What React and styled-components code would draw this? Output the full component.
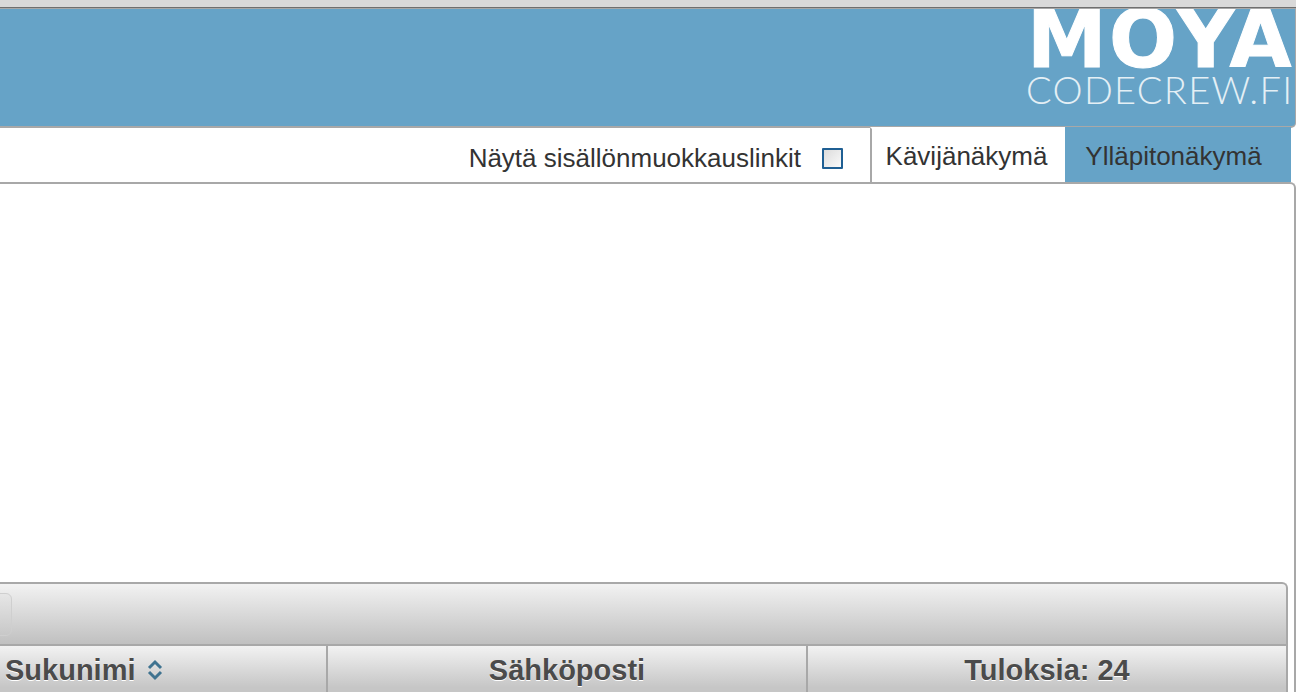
import React from "react";
import styled, { createGlobalStyle } from "styled-components";

const Global = createGlobalStyle`
  html, body { margin: 0; padding: 0; background: #fff; }
  body { font-family: "Liberation Sans", Arial, sans-serif; color: #333; overflow: hidden; }
`;
const Page = styled.div`
  width: 1296px; height: 692px; overflow: hidden; display: flex; flex-direction: column;
`;
const BrowserEdge = styled.div`
  height: 7px; flex: none; background: #d9d9d9; border-bottom: 1px solid #6f6f6f;
`;
const Header = styled.header`
  height: 117px; flex: none; background: #66a3c7; border-top: 1px solid #a8a8a8;
  border-bottom: 2px solid #a8a8a8; border-right: 1px solid #a8a8a8;
  border-bottom-right-radius: 5px; display: flex; justify-content: flex-end; overflow: hidden;
`;
const Logo = styled.div`
  width: 269px; flex: none; color: #fff; overflow: hidden; white-space: nowrap;
`;
const LogoMain = styled.div`
  font-family: "DejaVu Sans", sans-serif; font-weight: 700; font-size: 80px; line-height: 61px; height: 59px;
  letter-spacing: 2.5px; margin-left: 1px; -webkit-text-stroke: 1px #fff;
`;
const LogoSub = styled.div`
  font-family: Lato, "Open Sans", sans-serif; font-weight: 300; font-size: 38px; line-height: 36px;
  margin-top: 3px; color: #e4eff5; letter-spacing: 1.3px;
`;
const TabBar = styled.nav`
  height: 55px; flex: none; display: flex; justify-content: flex-end; align-items: stretch;
  padding-right: 5px; margin-top: -1px;
`;
const ContentToggle = styled.label`
  display: flex; align-items: center; font-size: 26px; margin-right: 27px; color: #333; padding-top: 8px;
`;
const Check = styled.span`
  width: 17px; height: 17px; margin-left: 21px; border: 2px solid #1f5f93; border-radius: 1px;
  background: linear-gradient(135deg, #dcdcdc, #fafafa); margin-top: -1px;
`;
const Tab = styled.a`
  width: ${p => p.$width}px; box-sizing: border-box; display: flex; align-items: center; justify-content: center;
  font-size: 26px;
  padding: ${p => p.$active ? "3px 9px 0 0" : "2px 4px 0 0"};
  background: ${p => p.$active ? "#66a3c7" : "#fff"};
  color: #333;
  border-left: ${p => p.$active ? "none" : "2px solid #a8a8a8"};
  border-top: ${p => p.$active ? "none" : "2px solid #fff"};
`;
const Panel = styled.main`
  flex: 1; min-height: 0; border-top: 2px solid #a8a8a8; border-right: 2px solid #a8a8a8;
  border-top-right-radius: 6px; padding-right: 6px; display: flex; flex-direction: column;
`;
const Blank = styled.div`
  height: 398px; flex: none;
`;
const Toolbar = styled.div`
  height: 60px; flex: none; display: flex; align-items: center;
  border-top: 2px solid #a8a8a8; border-right: 2px solid #a8a8a8; border-top-right-radius: 6px;
  background: linear-gradient(#f2f2f2, #c0c0c0);
`;
const ToolButton = styled.button`
  width: 40px; height: 43px; margin-left: -28px; border: 1px solid #cfcfcf; border-radius: 6px;
  background: linear-gradient(#e6e6e6, #c8c8c8); padding: 0;
`;
const TableHead = styled.div`
  flex: 1; display: grid; grid-template-columns: 326px 480px 480px; border-top: 2px solid #a8a8a8;
  border-right: 2px solid #a8a8a8; background: linear-gradient(#f2f2f2, #c6c6c6 90%);
`;
const HeadCell = styled.div`
  display: flex; align-items: flex-start; justify-content: ${p => p.$left ? "flex-start" : "center"};
  padding: ${p => p.$left ? "8px 0 0 5px" : "8px 0 0"}; font-size: 29px; font-weight: 700; color: #4b4b4b;
  text-shadow: 0 1px 0 #fff; white-space: nowrap;
  & + & { border-left: 2px solid #a8a8a8; }
`;
const Sort = styled.svg`
  width: 16px; height: 22px; margin: 5px 0 0 11px; flex: none;
`;

export default function App() {
  return (
    <Page>
      <Global />
      <BrowserEdge />
      <Header>
        <Logo>
          <LogoMain>MOYA</LogoMain>
          <LogoSub>CODECREW.FI</LogoSub>
        </Logo>
      </Header>
      <TabBar>
        <ContentToggle>Näytä sisällönmuokkauslinkit<Check /></ContentToggle>
        <Tab $width={195}>Kävijänäkymä</Tab>
        <Tab $width={226} $active>Ylläpitonäkymä</Tab>
      </TabBar>
      <Panel>
        <Blank />
        <Toolbar><ToolButton aria-label="toiminto" /></Toolbar>
        <TableHead>
          <HeadCell $left>
            Sukunimi
            <Sort viewBox="0 0 16 22" fill="none" stroke="#3f7390" strokeWidth="3">
              <path d="M2 9 8 3l6 6M2 13l6 6 6-6" />
            </Sort>
          </HeadCell>
          <HeadCell>Sähköposti</HeadCell>
          <HeadCell>Tuloksia: 24</HeadCell>
        </TableHead>
      </Panel>
    </Page>
  );
}
